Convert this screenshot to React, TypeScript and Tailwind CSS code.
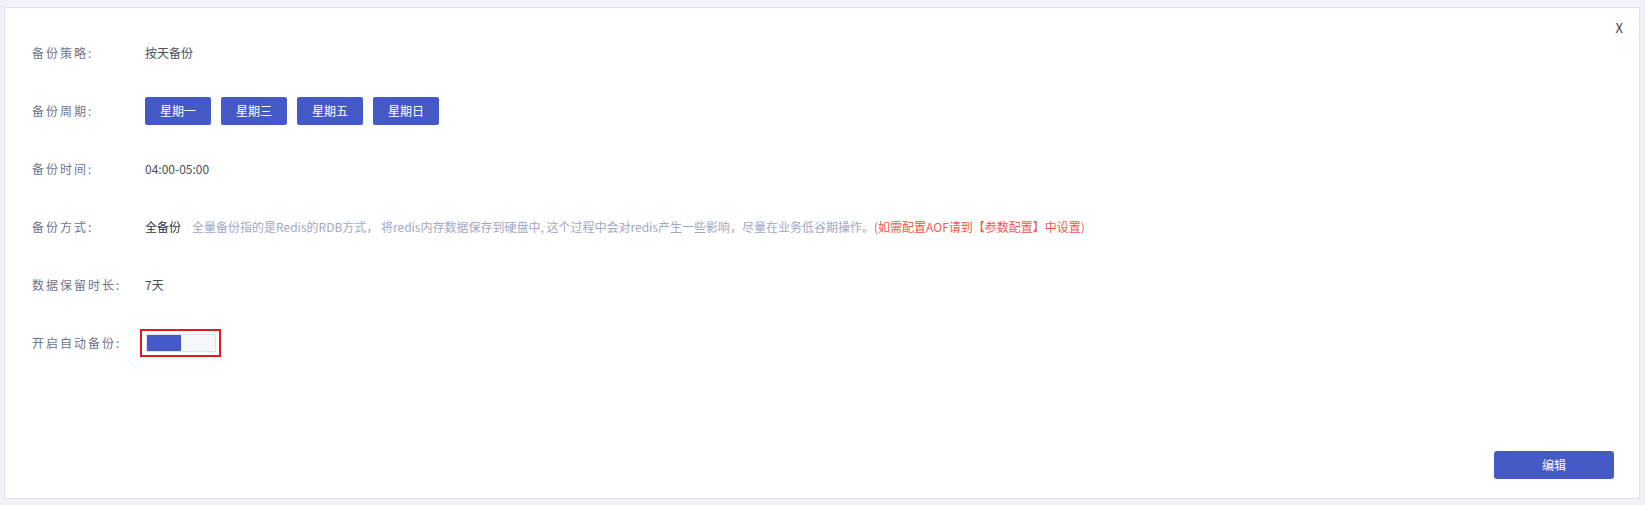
import React from "react";

const font = { fontFamily: '"Noto Sans CJK SC", "Noto Sans", sans-serif' };

function Label({ children }: { children: React.ReactNode }) {
  return (
    <div className="w-[113px] shrink-0 text-[12px] tracking-[2px] text-[#6f7489]">{children}</div>
  );
}

function Row({ label, children }: { label: string; children: React.ReactNode }) {
  return (
    <div className="flex h-[58px] items-center">
      <Label>{label}</Label>
      <div className="flex items-center text-[12px] text-[#4a4d5a]">{children}</div>
    </div>
  );
}

export default function App() {
  const days = ["星期一", "星期三", "星期五", "星期日"];
  return (
    <div className="min-h-[505px] w-full bg-[#f0f2f7] pt-[7px] pr-[5px] pb-[6px] pl-[4px]" style={font}>
      <div className="relative flex h-[492px] flex-col border border-[#dde2ec] bg-white pl-[27px] pt-[16px]">
        <div className="absolute right-[16px] top-[13px] text-[13px] leading-none text-[#444]">X</div>
        <Row label="备份策略:">按天备份</Row>
        <Row label="备份周期:">
          <div className="flex gap-[10px]">
            {days.map((d) => (
              <div
                key={d}
                className="flex h-[28px] w-[66px] items-center justify-center rounded-[2px] bg-[#455ac6] text-[12px] text-white"
              >
                {d}
              </div>
            ))}
          </div>
        </Row>
        <Row label="备份时间:">04:00-05:00</Row>
        <Row label="备份方式:">
          <span className="text-[#2f3140]">全备份</span>
          <span className="ml-[11px] text-[#a0a7c6]">
            全量备份指的是Redis的RDB方式， 将redis内存数据保存到硬盘中, 这个过程中会对redis产生一些影响，尽量在业务低谷期操作。
          </span>
          <span className="text-[#ee5a4e]">(如需配置AOF请到【参数配置】中设置)</span>
        </Row>
        <Row label="数据保留时长:">7天</Row>
        <Row label="开启自动备份:">
          <div className="-ml-[5px] flex h-[28px] w-[81px] items-center justify-center border-2 border-[#e3191f]">
            <div className="flex h-[18px] w-[70px] overflow-hidden border border-[#dde3ee] bg-[#f5f7fa]">
              <div className="h-full w-[34px] bg-[#455ac6]" />
            </div>
          </div>
        </Row>
        <div className="flex-1" />
        <div className="flex justify-end pb-[19px] pr-[25px]">
          <div className="flex h-[28px] w-[120px] items-center justify-center rounded-[3px] bg-[#455ac6] text-[12px] text-white">
            编辑
          </div>
        </div>
      </div>
    </div>
  );
}
